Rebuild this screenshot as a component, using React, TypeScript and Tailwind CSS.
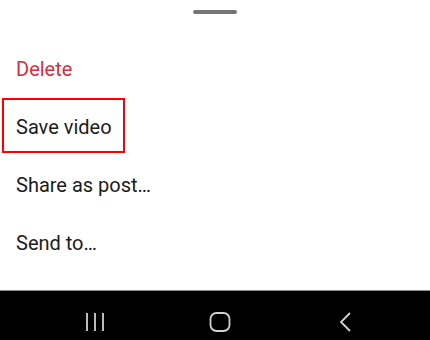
const items = [
  { label: "Delete", danger: true },
  { label: "Save video", highlight: true },
  { label: "Share as post…" },
  { label: "Send to…" },
];

function NavBar() {
  return (
    <div className="relative h-[50px] border-t border-[#8a8a8a] bg-black">
      {/* recents */}
      <svg className="absolute left-[84px] top-[21px]" width="22" height="20" viewBox="0 0 22 20" fill="none">
        <path d="M3 1v18M11 1v18M19 1v18" stroke="#d0d0d0" strokeWidth="1.8" />
      </svg>
      {/* home */}
      <svg className="absolute left-[209px] top-[21px]" width="22" height="20" viewBox="0 0 22 20" fill="none">
        <rect x="1.5" y="1" width="19" height="18" rx="6" stroke="#d0d0d0" strokeWidth="1.8" />
      </svg>
      {/* back */}
      <svg className="absolute left-[338px] top-[21px]" width="16" height="20" viewBox="0 0 16 20" fill="none">
        <path d="M12 1 3 10l9 9" stroke="#d0d0d0" strokeWidth="1.8" />
      </svg>
    </div>
  );
}

export default function App() {
  return (
    <div className="flex h-[340px] w-[430px] flex-col overflow-hidden bg-white font-['Roboto',sans-serif]">
      <div className="flex h-[40px] justify-center pt-[10px]">
        <span className="block h-[4px] w-[44px] rounded-full bg-[#757575]" />
      </div>

      <ul className="flex-1">
        {items.map((it) => (
          <li
            key={it.label}
            className={
              "relative flex h-[58px] items-center pl-4 text-[20px] " +
              (it.danger ? "text-[#d32f3c]" : "text-[#1c1c1c]")
            }
          >
            {it.label}
            {it.highlight && (
              <span className="absolute left-[2px] top-0 h-[55px] w-[123px] border-2 border-[#ff0000]" />
            )}
          </li>
        ))}
      </ul>

      <NavBar />
    </div>
  );
}
